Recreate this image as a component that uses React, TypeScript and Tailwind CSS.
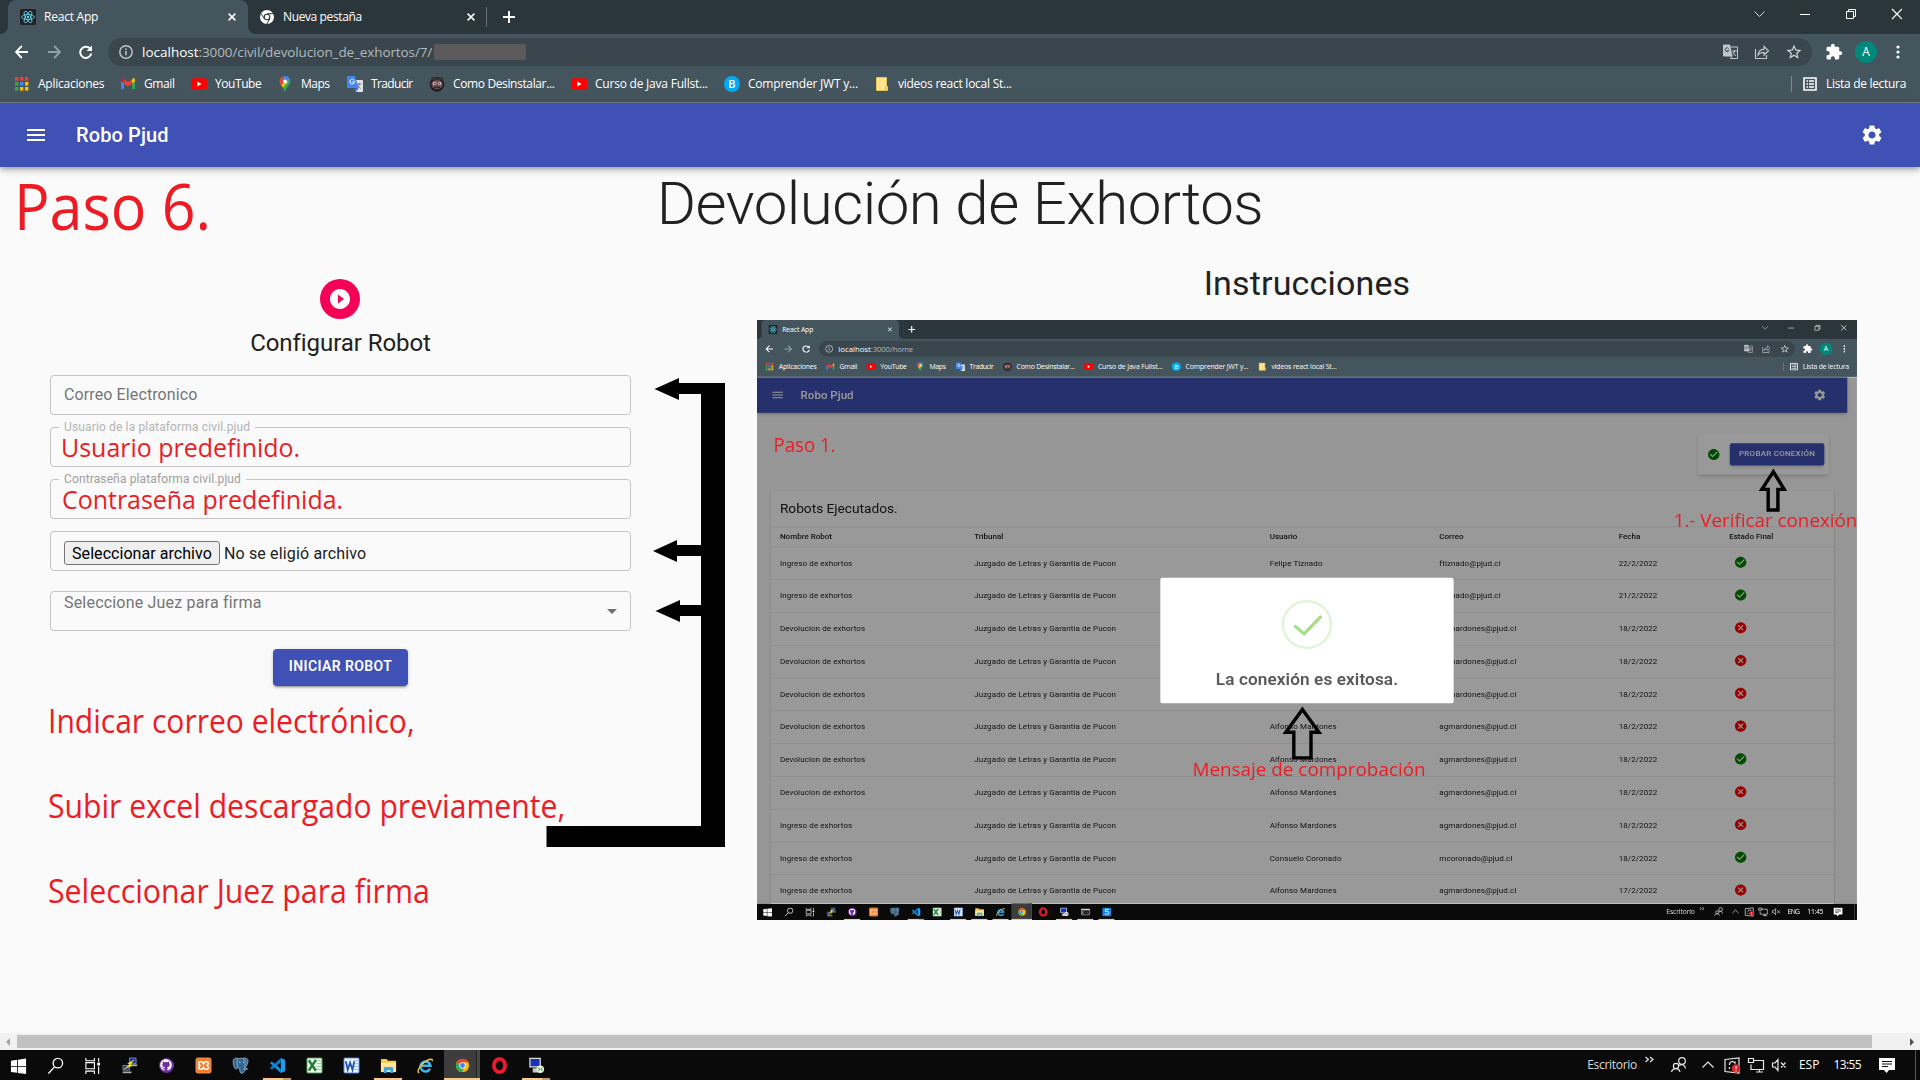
import { useLayoutEffect, useRef, useState, type ReactNode } from "react";
import {
  MdCancel,
  MdCheckCircle,
  MdExtension,
  MdMenu,
  MdPlayCircleFilled,
  MdSettings,
  MdStarBorder,
} from "react-icons/md";
import { FaGithub } from "react-icons/fa";

/* Sets a run of text to an exact width by spreading the difference over its letters. */
function Fit({ w, className = "", children }: { w: number; className?: string; children: string }) {
  const ref = useRef<HTMLSpanElement>(null);
  const [spacing, setSpacing] = useState(0);
  useLayoutEffect(() => {
    if (ref.current) setSpacing((w - ref.current.offsetWidth) / children.length);
  }, [w, children]);
  return (
    <span
      ref={ref}
      className={`inline-block justify-self-start whitespace-pre ${className}`}
      style={{ letterSpacing: `${spacing}px` }}
    >
      {children}
    </span>
  );
}

/* Red annotation drawn over the page, condensed to an exact width. */
function Note({ w, className = "", children }: { w: number; className?: string; children: string }) {
  const ref = useRef<HTMLSpanElement>(null);
  const [scale, setScale] = useState(1);
  useLayoutEffect(() => {
    if (ref.current) setScale(w / ref.current.offsetWidth);
  }, [w, children]);
  return (
    <span
      ref={ref}
      className={`absolute origin-left whitespace-nowrap font-['Open_Sans',sans-serif] leading-none text-[#ed1c24] ${className}`}
      style={{ transform: `scaleX(${scale})` }}
    >
      {children}
    </span>
  );
}

/* ---------- small icons ---------- */

const ReactLogo = () => (
  <svg viewBox="0 0 16 16" className="size-4 shrink-0">
    <rect width="16" height="16" rx="1.5" fill="#222" />
    <g fill="none" stroke="#61dafb" strokeWidth=".8">
      <ellipse cx="8" cy="8" rx="6.4" ry="2.5" />
      <ellipse cx="8" cy="8" rx="6.4" ry="2.5" transform="rotate(60 8 8)" />
      <ellipse cx="8" cy="8" rx="6.4" ry="2.5" transform="rotate(120 8 8)" />
    </g>
    <circle cx="8" cy="8" r="1.2" fill="#61dafb" />
  </svg>
);

const ChromeMono = () => (
  <svg viewBox="0 0 16 16" className="size-4 shrink-0">
    <circle cx="8" cy="8" r="7" fill="#fff" />
    <circle cx="8" cy="8" r="3.3" fill="#2b363c" />
    <circle cx="8" cy="8" r="2.2" fill="#fff" />
    <path d="M8 4.7h6.2M5.1 9.6L2 4.4M10.9 9.6L7.8 15" stroke="#2b363c" strokeWidth="1" />
  </svg>
);

const Cross = () => (
  <svg viewBox="0 0 8 8" className="size-2 shrink-0">
    <path d="M.6.6l6.8 6.8M7.4.6L.6 7.4" stroke="#fff" strokeWidth="1.5" />
  </svg>
);

const AppsIcon = () => (
  <svg viewBox="0 0 16 16" className="size-4">
    {["#ea4335", "#ea4335", "#ea4335", "#34a853", "#4285f4", "#fbbc04", "#34a853", "#fbbc04", "#fbbc04"].map((c, i) => (
      <rect key={i} x={1 + (i % 3) * 5} y={1 + Math.floor(i / 3) * 5} width="3.4" height="3.6" fill={c} />
    ))}
  </svg>
);

const GmailIcon = () => (
  <svg viewBox="0 0 16 16" className="size-4">
    <path d="M1 4v9h3V7z" fill="#4285f4" />
    <path d="M15 4v9h-3V7z" fill="#34a853" />
    <path d="M1 5V3.6C1 2.4 2.4 2 3.3 2.6L4 3.2v4.3L1 5.3z" fill="#c5221f" />
    <path d="M15 5V3.6c0-1.2-1.4-1.6-2.3-1L12 3.2v4.3l3-2.2z" fill="#fbbc04" />
    <path d="M4 3.2l4 3 4-3v4.3l-4 3-4-3z" fill="#ea4335" />
  </svg>
);

const YouTubeIcon = () => (
  <svg viewBox="0 0 16 16" className="size-4">
    <rect y="2.3" width="16" height="11.4" rx="2.4" fill="#f00" />
    <path d="M6.3 5.6v4.8L10.6 8z" fill="#fff" />
  </svg>
);

const MapsIcon = () => (
  <svg viewBox="0 0 16 16" className="size-4">
    <clipPath id="pin">
      <path d="M8 0a5.4 5.4 0 0 0-5.4 5.4C2.600 9 6.600 10.500 8 16c1.400-5.500 5.400-7 5.400-10.600A5.400 5.400 0 0 0 8 0z" />
    </clipPath>
    <g clipPath="url(#pin)">
      <path d="M0 0h16v16H0z" fill="#34a853" />
      <path d="M0 0h8L8 5 2 11H0z" fill="#ea4335" />
      <path d="M6 0h10v3L8 6z" fill="#4285f4" />
      <path d="M2 12l7-8 2 2-7 8z" fill="#fbbc04" />
    </g>
    <circle cx="8" cy="5.400" r="1.900" fill="#fff" />
  </svg>
);

const TranslateIcon = () => (
  <svg viewBox="0 0 16 16" className="size-4">
    <path d="M6 4h9.200q.8 0 .8.8v10.400q0 .8-.8.8H9z" fill="#dfe3e8" />
    <path d="M10 8h4.500M12.200 7v1c0 2-1 3.500-2.400 4.500M10.800 9.500c.6 1.300 1.500 2.300 2.900 3" stroke="#667" strokeWidth=".8" fill="none" />
    <path d="M.8 0H8l3.500 12H.8Q0 12 0 11.200V.8Q0 0 .8 0z" fill="#4285f4" />
    <path d="M7.300 4.600A2.300 2.300 0 1 0 7.500 6H5.400" stroke="#fff" strokeWidth="1" fill="none" />
    <path d="M8 12h3.500L9 16z" fill="#3367d6" />
  </svg>
);

const FaceIcon = () => (
  <svg viewBox="0 0 16 16" className="size-4">
    <circle cx="8" cy="8.300" r="7.400" fill="#231f20" />
    <path d="M1.500 4L3 .8l2.500 1.500h5L13 .8 14.500 4z" fill="#3a3334" />
    <ellipse cx="8" cy="8.600" rx="5.600" ry="4.600" fill="#6b5558" />
    <circle cx="5.600" cy="7.400" r="1.700" fill="#d9cfd0" />
    <circle cx="10.400" cy="7.400" r="1.700" fill="#d9cfd0" />
    <circle cx="5.800" cy="7.500" r=".9" fill="#a22" />
    <circle cx="10.200" cy="7.500" r=".9" fill="#a22" />
    <path d="M5 11.500q3-1.300 6 0" stroke="#1b1718" fill="none" />
  </svg>
);

const BIcon = () => (
  <span className="flex size-4 items-center justify-center rounded-full bg-[#03a9f4] font-['Open_Sans',sans-serif] text-[11px] font-semibold text-white">
    B
  </span>
);

const FolderIcon = () => (
  <svg viewBox="0 0 16 16" className="size-4">
    <path d="M2.500 1.500h10v9h1v4h-11z" fill="#ffe48e" stroke="#e9c558" />
    <path d="M11.500 10.500v3.500" stroke="#e9b93f" />
  </svg>
);

/* ---------- browser ---------- */

const bookmarks: { icon: ReactNode; label: string; w: number; box: string }[] = [
  { icon: <AppsIcon />, label: "Aplicaciones", w: 66, box: "w-[106px]" },
  { icon: <GmailIcon />, label: "Gmail", w: 31, box: "w-[71px]" },
  { icon: <YouTubeIcon />, label: "YouTube", w: 46, box: "w-[86px]" },
  { icon: <MapsIcon />, label: "Maps", w: 29, box: "w-[70px]" },
  { icon: <TranslateIcon />, label: "Traducir", w: 42, box: "w-[82px]" },
  { icon: <FaceIcon />, label: "Como Desinstalar...", w: 102, box: "w-[142px]" },
  { icon: <YouTubeIcon />, label: "Curso de Java Fullst...", w: 113, box: "w-[153px]" },
  { icon: <BIcon />, label: "Comprender JWT y...", w: 110, box: "w-[150px]" },
  { icon: <FolderIcon />, label: "videos react local St...", w: 114, box: "w-[150px]" },
];

function BrowserChrome({ newTab = false, path, redacted = false }: { newTab?: boolean; path: ReactNode; redacted?: boolean }) {
  return (
    <div className="h-[103px] border-b border-[#74818a] bg-[#45555e] font-['Open_Sans',sans-serif] text-[12px] text-white">
      <div className="flex h-[34px] bg-[#2b363c]">
        <div className="w-2 bg-[#45555e]">
          <div className="h-full rounded-br-lg bg-[#2b363c]" />
        </div>
        <div className="flex w-[240px] items-center rounded-t-lg bg-[#45555e] pl-3 pr-3">
          <ReactLogo />
          <Fit w={54} className="ml-2">React App</Fit>
          <span className="ml-auto">
            <Cross />
          </span>
        </div>
        <div className="w-2 bg-[#45555e]">
          <div className="h-full rounded-bl-lg bg-[#2b363c]" />
        </div>
        {newTab && (
          <div className="flex w-[231px] items-center pl-[3px]">
            <ChromeMono />
            <Fit w={79} className="ml-2">Nueva pestaña</Fit>
            <span className="ml-auto mr-[11px]">
              <Cross />
            </span>
            <div className="h-5 w-px bg-[#65727a]" />
          </div>
        )}
        <svg viewBox="0 0 12 12" className={newTab ? "ml-4 mt-[11px] size-3" : "ml-2 mt-[11px] size-3"}>
          <path d="M6 0v12M0 6h12" stroke="#fff" strokeWidth="2" />
        </svg>
        <svg viewBox="0 0 150 12" className="ml-auto mr-[18px] mt-2 h-3 w-[150px]" fill="none" stroke="#fff">
          <path d="M2.500 3.500L7.500 8.500L12.500 3.500" stroke="#d5d9db" />
          <path d="M48 6.500h10" />
          <path d="M94.500 3.500h7v7h-7zM96.500 3v-1.500h7v7h-1.500" />
          <path d="M140 1l10 10M150 1l-10 10" strokeWidth="1.200" />
        </svg>
      </div>

      <div className="flex h-9 items-center pl-[15px]">
        <svg viewBox="0 0 80 14" className="h-3.5 w-20" fill="none" strokeWidth="1.800">
          <path d="M13 7H1M6.800 1L1 7l5.800 6" stroke="#fff" />
          <path d="M33 7h12M39.200 1L45 7l-5.800 6" stroke="#95a0a6" />
          <path d="M75.500 4.200A5.600 5.600 0 1 0 76.300 8.600" stroke="#fff" strokeWidth="2" />
          <path d="M77 .6v5.400h-5.400z" fill="#fff" />
        </svg>
        <div className="ml-[13px] flex h-7 w-[1704px] items-center rounded-full bg-[#39464d] pl-[11px] pr-[9px]">
          <svg viewBox="0 0 14 14" className="size-3.5">
            <circle cx="7" cy="7" r="6.200" fill="none" stroke="#c3c9cc" strokeWidth="1.400" />
            <path d="M7 6v4.300M7 3.500v1.500" stroke="#c3c9cc" strokeWidth="1.500" />
          </svg>
          <span className="ml-[9px] text-[13.5px] text-[#b3babe]">{path}</span>
          {redacted && <span className="ml-[2px] h-4 w-[92px] bg-[#5b5959]" />}
          <svg viewBox="0 0 46 16" className="ml-auto mr-3.5 h-4 w-[46px]" fill="none" stroke="#c0c6c9">
            <path d="M.5 1h6.300l2 11H.5z" fill="#c0c6c9" />
            <path d="M5.700 4.800A1.900 1.900 0 1 0 5.800 6.500H4.200" stroke="#39464d" />
            <path d="M8 3h6.500v11.500H7.500l1.500-2.500M9 7h5M11.500 6v1c0 2-1 3.200-2 4M10 8.500c.6 1.500 1.700 2.700 3 3.300" />
            <path d="M32.500 5v9.500h11V11" strokeWidth="1.200" />
            <path d="M35 11c.5-3.800 3-5.600 6-5.800V2.500l4.500 4.300-4.500 4.200V8.300c-2.500 0-4.500.8-6 2.700z" strokeWidth="1.200" />
          </svg>
          <MdStarBorder className="ml-0.5 size-[18px] text-[#d0d5d7]" />
        </div>
        <MdExtension className="ml-[13px] size-[18px]" />
        <div className="ml-3 flex size-[22px] items-center justify-center rounded-full bg-[#00897b] text-[12px]">A</div>
        <svg viewBox="0 0 4 14" className="ml-[19px] h-3.5 w-1" fill="#fff">
          <circle cx="2" cy="2" r="1.600" />
          <circle cx="2" cy="7" r="1.600" />
          <circle cx="2" cy="12" r="1.600" />
        </svg>
      </div>

      <div className="flex h-7 items-center pl-3.5">
        {bookmarks.map((b) => (
          <div key={b.label} className={`flex shrink-0 items-center gap-2 ${b.box}`}>
            <span className="flex size-4 shrink-0">{b.icon}</span>
            <Fit w={b.w}>{b.label}</Fit>
          </div>
        ))}
        <div className="ml-auto h-4 w-px bg-[#7d898f]" />
        <svg viewBox="0 0 14 14" className="ml-[11px] size-3.5" fill="none" stroke="#fff">
          <path d="M1 1h12v12H1z" strokeWidth="1.600" />
          <path d="M3.500 4h1.500M6 4h5M3.500 7h1.500M6 7h5M3.500 10h1.500M6 10h5" strokeWidth="1.400" />
        </svg>
        <Fit w={80} className="ml-[9px] mr-3.5">Lista de lectura</Fit>
      </div>
    </div>
  );
}

function AppBar({ className = "" }: { className?: string }) {
  return (
    <header
      className={`relative flex h-16 shrink-0 items-center bg-[#3f51b5] pl-6 text-white shadow-[0_2px_4px_-1px_rgba(0,0,0,.2),0_4px_5px_0_rgba(0,0,0,.14),0_1px_10px_0_rgba(0,0,0,.12)] ${className}`}
    >
      <MdMenu className="size-6" />
      <Fit w={93} className="ml-7 text-[20px] font-medium">Robo Pjud</Fit>
      <MdSettings className="ml-auto size-6" />
    </header>
  );
}

/* ---------- Windows taskbar ---------- */

const taskIcons: Record<string, ReactNode> = {
  windows: (
    <path d="M1 4l6.600-1v6.500H1zM8.500 2.900L17 1.700v7.800H8.500zM1 10.400h6.600v6.400L1 15.900zM8.500 10.400H17V18l-8.500-1.100z" fill="#fff" />
  ),
  search: (
    <g fill="none" stroke="#fff" strokeWidth="1.400">
      <circle cx="11.500" cy="6.500" r="5" />
      <path d="M8 10.500L1.500 17.500" />
    </g>
  ),
  tasks: (
    <g fill="none" stroke="#fff" strokeWidth="1.200">
      <path d="M2 1v3h9V1M2 18v-3h9v3M2 6h9v6.500H2zM15.500 1v4M15.500 10v8" />
      <path d="M14 6h3v3h-3z" fill="#fff" stroke="none" />
    </g>
  ),
  putty: (
    <g stroke="#777" strokeWidth=".6">
      <path d="M9 1h7v6H9zM2 9h7v5H2z" fill="#1f2f9c" stroke="#c8c8c8" />
      <path d="M9 8h8v1.500H9zM2 15.500h9V17H2z" fill="#c8c8c8" />
      <path d="M14 3L7 7l2 1-6 5 9-4-2-1z" fill="#ff0" stroke="#bb0" />
    </g>
  ),
  xampp: (
    <g>
      <rect x="1" y="1" width="16" height="16" rx="2" fill="#fb7a24" stroke="#f6b98a" strokeWidth=".7" />
      <path d="M5 5h2.500L9 7.500 10.500 5H13q1 0 1 1v1.500L12.500 9l1.500 1.500V12q0 1-1 1h-2.500L9 10.500 7.500 13H5q-1 0-1-1v-1.500L5.500 9 4 7.500V6q0-1 1-1z" fill="none" stroke="#fff" strokeWidth="1.500" />
    </g>
  ),
  postgres: (
    <g fill="#336791" stroke="#9db8cd" strokeWidth=".8">
      <path d="M6.500 1.500C3 .5 1 2 1.200 5c.2 3 1.300 7.500 3 7.800 1 .2 1.600-1 2.300-1.800z" />
      <path d="M12 1.300c3-.7 5.200.7 5 3-.2 2.600-1.800 6-3.300 7.700 1 .6 2.300.3 3 .2-.6 1.300-2.400 1.700-3.800 1.500z" />
      <path d="M6 2.500C8 .8 11.500.8 13 2.500c1.300 1.600 1 4.500.6 7.500-.4 2.300 0 7-3 7.300-2.600.2-2.300-2.600-2.400-5C6.500 12 5.800 10.800 6 9c-.8-2-1.200-5 0-6.500z" />
      <path d="M7.500 5.500h1.500M11.500 5.500h1.200" stroke="#fff" />
    </g>
  ),
  vscode: (
    <g>
      <path d="M12.500 1L17 3v12l-4.500 2z" fill="#1f9cf0" />
      <path d="M12.500 1v4.500L3 13.200 1 11.700 12.500 1z" fill="#0a7acc" />
      <path d="M12.500 17v-4.500L3 4.800 1 6.300 12.500 17z" fill="#0f8fe0" />
    </g>
  ),
  excel: (
    <g>
      <rect x="1" y="1" width="16" height="16" rx="1" fill="#eef7ee" stroke="#3b9b47" />
      <path d="M11 4h5M11 7h5M11 10h5M11 13h5" stroke="#8cc692" />
      <path d="M3 3.500l7.500 11M10.500 3L3 14.500" stroke="#1e7d2f" strokeWidth="2.600" />
    </g>
  ),
  word: (
    <g>
      <rect x="1" y="1" width="16" height="16" rx="1" fill="#eef4ff" stroke="#3f7bd0" />
      <path d="M11 4h5M11 7h5M11 10h5M11 13h5" stroke="#8fb4e6" />
      <path d="M3 4.500l2 9 2.500-7.500L10 13.500l2-9" stroke="#1f54b0" strokeWidth="1.900" fill="none" />
    </g>
  ),
  explorer: (
    <g>
      <path d="M1 2h6l1.500 2H17v12H1z" fill="#f5c751" />
      <path d="M1 6h16v10H1z" fill="#ffe596" />
      <path d="M4 17v-5q0-1.500 1.500-1.500h7q1.500 0 1.500 1.500v5h-3v-3H7v3z" fill="#3aa6e8" />
    </g>
  ),
  ie: (
    <g fill="none">
      <path d="M13.800 12.500A5.300 5.300 0 1 1 14.300 9.300H5" stroke="#3fb6f0" strokeWidth="2.600" />
      <path d="M2.500 16.500C-.5 17 1.500 10 8 5.500 12 2.500 17 .5 16 4.500" stroke="#f5c242" strokeWidth="1.500" />
    </g>
  ),
  chrome: (
    <g>
      <circle cx="9" cy="9" r="7" fill="#fbbc04" />
      <path d="M9 9L2.900 5.500A7 7 0 0 1 15.100 5.500H9z" fill="#ea4335" />
      <path d="M9 9L2.900 5.500A7 7 0 0 0 8.500 16L11 11z" fill="#34a853" />
      <circle cx="9" cy="9" r="3.400" fill="#fff" />
      <circle cx="9" cy="9" r="2.600" fill="#4285f4" />
    </g>
  ),
  opera: <ellipse cx="9" cy="9" rx="5.900" ry="7" fill="none" stroke="#e81c2e" strokeWidth="4" />,
  remote: (
    <g>
      <path d="M2 1.500h11v9H2z" fill="#1734b8" stroke="#dcdcdc" strokeWidth="1.300" />
      <path d="M5 12h6v2h2v2.500H5z" fill="#c9c9c9" />
      <circle cx="13" cy="13" r="4" fill="#e8f2e4" />
      <path d="M10.500 11.500l2 1.500-2 1.500M15.500 11.500l-2 1.500 2 1.500" stroke="#3a8a35" fill="none" />
    </g>
  ),
  cmd: (
    <g>
      <path d="M1.500 3.500h15v11h-15z" fill="#111" stroke="#ddd" />
      <path d="M1.500 4.500h15" stroke="#ddd" strokeWidth="2" />
      <path d="M6.500 8.500h-3v3h3M9 9h1M9 11h1M12 8.500l2 3" stroke="#ddd" fill="none" />
    </g>
  ),
  blue: (
    <g>
      <path d="M1 1h16v16H1z" fill="#1683e8" />
      <path d="M13 4H6.500v4H11q1.500 0 1.500 2v1q0 2-1.500 2H5.500" stroke="#fff" strokeWidth="1.600" fill="none" />
    </g>
  ),
};

type Task = { id: string; open?: boolean; grouped?: boolean };

function Taskbar({ tasks, lang, time }: { tasks: Task[]; lang: string; time: string }) {
  return (
    <div className="flex h-[30px] items-center bg-[#0a0a0a] font-['Open_Sans',sans-serif] text-[12px] text-white">
      {tasks.map((t) => (
        <div key={t.id} className="relative flex h-[30px] w-[37px] shrink-0 items-center justify-center pr-px">
          {t.id === "chrome" && (
            <div className="absolute inset-y-0 left-0 flex w-9 bg-[#3d3d3d]">
              <div className="ml-auto w-1 border-l border-[#222] bg-[#484848]" />
            </div>
          )}
          {t.id === "github" ? (
            <span className="flex size-[15px] items-center justify-center rounded-full bg-[#6e2fa0]">
              <FaGithub className="size-[12px]" />
            </span>
          ) : (
            <svg viewBox="0 0 18 18" className="relative size-[17px]">
              {taskIcons[t.id]}
            </svg>
          )}
          {t.open && (
            <div className={`absolute bottom-0 flex h-0.5 bg-[#fbc88b] ${t.id === "chrome" ? "left-0 w-9" : "left-1 w-7"}`}>
              {t.grouped && <div className="ml-auto w-2 bg-[#c69a6c]" />}
            </div>
          )}
        </div>
      ))}
      <Fit w={50} className="ml-auto text-[#dcdcdc]">Escritorio</Fit>
      <svg viewBox="0 0 290 30" className="ml-2 h-[30px] w-[155px] shrink-0" preserveAspectRatio="xMinYMid slice" fill="none" stroke="#e8e8e8">
        <path d="M.5 7l3 2.500-3 2.500M5 7l3 2.500-3 2.500" strokeWidth="1.200" />
        <g strokeWidth="1.200">
          <circle cx="37" cy="11" r="3.300" />
          <circle cx="31" cy="16" r="2.600" />
          <path d="M26.500 22c.5-2.500 2-3.400 4.500-3.400s3.500 1 4 3.400M34 15.500c3.500-2 6-.5 6.500 3" />
          <path d="M57.500 17.500L63 12l5.500 5.500" />
          <path d="M80 9.500l14-1.500v15L80 21.500z" />
          <path d="M84.500 15a3 3 0 0 1 5.500-2v-1.500M84.500 17v2" />
          <circle cx="91" cy="18.500" r="4.300" fill="#e0242b" stroke="none" />
          <path d="M91 16v3M91 20.200v1.200" />
          <path d="M108 10.500h10.500v9H106v-5M111 22h7M114.500 20v2M103.500 8.500h5v4h-5z" />
          <path d="M127.500 13h2.500l3-3.500v11L130 17h-2.500zM136 12.500l4.500 5M140.500 12.500l-4.500 5" />
        </g>
      </svg>
      <Fit w={20} className="-ml-px">{lang}</Fit>
      <Fit w={28} className="ml-[14px]">{time}</Fit>
      <svg viewBox="0 0 16 17" className="ml-[18px] h-[17px] w-4">
        <path d="M0 1h16v12h-6l-2.500 3L5 13H0z" fill="#fff" />
        <path d="M3 4.500h10M3 7h10M3 9.500h6" stroke="#111" />
      </svg>
      <div className="ml-5 mr-1 h-[30px] w-px bg-[#555]" />
    </div>
  );
}

/* ---------- instructions picture: a smaller desktop ---------- */

const rows = [
  ["Ingreso de exhortos", "Felipe Tiznado", "ftiznado@pjud.cl", "22/2/2022", true],
  ["Ingreso de exhortos", "Felipe Tiznado", "ftiznado@pjud.cl", "21/2/2022", true],
  ["Devolucion de exhortos", "Alfonso Mardones", "agmardones@pjud.cl", "18/2/2022", false],
  ["Devolucion de exhortos", "Alfonso Mardones", "agmardones@pjud.cl", "18/2/2022", false],
  ["Devolucion de exhortos", "Alfonso Mardones", "agmardones@pjud.cl", "18/2/2022", false],
  ["Devolucion de exhortos", "Alfonso Mardones", "agmardones@pjud.cl", "18/2/2022", false],
  ["Devolucion de exhortos", "Alfonso Mardones", "agmardones@pjud.cl", "18/2/2022", true],
  ["Devolucion de exhortos", "Alfonso Mardones", "agmardones@pjud.cl", "18/2/2022", false],
  ["Ingreso de exhortos", "Alfonso Mardones", "agmardones@pjud.cl", "18/2/2022", false],
  ["Ingreso de exhortos", "Consuelo Coronado", "mcoronado@pjud.cl", "18/2/2022", true],
  ["Ingreso de exhortos", "Alfonso Mardones", "agmardones@pjud.cl", "17/2/2022", false],
] as const;

const columns = "grid grid-cols-[339px_516px_296px_313px_193px_1fr] items-center pl-4";

function InstructionPicture() {
  return (
    <div className="h-[600px] w-[1100px] overflow-hidden">
      <div className="relative flex h-[1080px] w-[1920px] origin-top-left scale-x-[0.5729] scale-y-[0.5556] flex-col">
        <BrowserChrome
          path={
            <span className="flex">
              <Fit w={57} className="text-white">localhost</Fit>
              <Fit w={74}>:3000/home</Fit>
            </span>
          }
        />
        <div className="relative h-[947px] overflow-hidden bg-[#fafafa] text-[#212121]">
          <AppBar className="w-[1903px] pr-9" />
          <div className="flex justify-end pr-[49px] pt-[38px]">
            <div className="flex h-[73px] w-[229px] items-center justify-between rounded bg-white pl-4 pr-2 shadow-md">
              <MdCheckCircle className="size-6 text-[#008000]" />
              <div className="flex h-10 w-[165px] items-center justify-center rounded bg-[#3f51b5] pb-0.5 text-[14px] font-medium text-white shadow-md">
                <Fit w={133}>PROBAR CONEXIÓN</Fit>
              </div>
            </div>
          </div>
          <div className="ml-6 mt-[30px] w-[1856px] rounded bg-white text-[14px] shadow">
            <div className="flex h-16 items-center pl-4">
              <Fit w={206} className="text-[24px]">Robots Ejecutados.</Fit>
            </div>
            <div className={`h-[37px] border-y border-[#e0e0e0] font-medium ${columns}`}>
              <span>Nombre Robot</span>
              <span>Tribunal</span>
              <span>Usuario</span>
              <span>Correo</span>
              <span>Fecha</span>
              <span>Estado Final</span>
            </div>
            {rows.map((r, i) => (
              <div key={i} className={`h-[59px] border-b border-[#e0e0e0] pb-[2px] ${columns}`}>
                <span className="tracking-[0.14px]">{r[0]}</span>
                <Fit w={248}>Juzgado de Letras y Garantia de Pucon</Fit>
                <span className="tracking-[0.14px]">{r[1]}</span>
                <span className="tracking-[0.14px]">{r[2]}</span>
                <Fit w={68}>{r[3]}</Fit>
                {r[4] ? (
                  <MdCheckCircle className="mb-[3px] ml-2 size-6 text-[#008000]" />
                ) : (
                  <MdCancel className="mb-[3px] ml-2 size-6 text-[#ff0000]" />
                )}
              </div>
            ))}
          </div>
          <div className="absolute inset-0 flex items-start justify-center bg-black/40">
            <div className="mt-[361px] flex h-[226px] w-[512px] flex-col items-center rounded bg-white pt-10">
              <svg viewBox="0 0 88 88" className="size-[88px]" fill="none">
                <circle cx="44" cy="44" r="42" stroke="#e1f3d5" strokeWidth="4" />
                <path d="M22 46l17 15 30-32" stroke="#a5dc86" strokeWidth="5.500" />
              </svg>
              <Fit w={318} className="mt-[34px] text-[30px] font-semibold leading-[42px] text-[#595959]">La conexión es exitosa.</Fit>
            </div>
          </div>
        </div>
        <Taskbar
          lang="ENG"
          time="11:45"
          tasks={[
            { id: "windows" }, { id: "search" }, { id: "tasks" }, { id: "putty" },
            { id: "github", open: true }, { id: "xampp" }, { id: "postgres" },
            { id: "vscode", open: true, grouped: true }, { id: "excel" }, { id: "word", open: true },
            { id: "explorer", open: true }, { id: "ie", open: true }, { id: "chrome", open: true }, { id: "opera" },
            { id: "remote", open: true }, { id: "cmd", open: true }, { id: "blue", open: true },
          ]}
        />
        <svg viewBox="0 0 1920 1080" className="absolute inset-0" fill="none" stroke="#000" strokeWidth="6">
          <path d="M1774 273l19 32h-11v37h-17v-37h-11z" />
          <path d="M952 701l29 41h-14v46h-30v-46h-14z" />
        </svg>
        <Note w={108} className="left-[29px] top-[206px] text-[36px]">Paso 1.</Note>
        <Note w={321} className="left-[1600px] top-[344px] text-[32px]">1.- Verificar conexión</Note>
        <Note w={407} className="left-[760px] top-[790px] text-[34px]">Mensaje de comprobación</Note>
      </div>
    </div>
  );
}

/* ---------- form ---------- */

const field = "relative h-10 w-[581px] shrink-0 rounded border border-[#c4c4c4] pl-[13px] text-[16px]";

function Form() {
  return (
    <div className="flex w-[581px] flex-col items-center">
      <div className="mr-[2px] flex size-10 items-center justify-center rounded-full bg-[#f50057] text-white">
        <MdPlayCircleFilled className="size-6" />
      </div>
      <Fit w={180} className="mt-2 text-[24px] leading-8">Configurar Robot</Fit>
      <div className={`${field} mt-4 flex items-center text-[#757575]`}>
        <Fit w={134}>Correo Electronico</Fit>
      </div>
      <div className={`${field} mt-3`}>
        <span className="absolute -top-[11px] left-2 flex h-5 items-center bg-[#fafafa] px-[5px]">
          <Fit w={186} className="text-[12px] text-[#b4b4b4]">Usuario de la plataforma civil.pjud</Fit>
        </span>
        <Note w={239} className="left-[10px] top-[6px] text-[26px]">Usuario predefinido.</Note>
      </div>
      <div className={`${field} mt-3`}>
        <span className="absolute -top-[11px] left-2 flex h-5 items-center bg-[#fafafa] px-[5px]">
          <Fit w={177} className="text-[12px] text-[#a0a0a0]">Contraseña plataforma civil.pjud</Fit>
        </span>
        <Note w={281} className="left-[11px] top-[6px] text-[26px]">Contraseña predefinida.</Note>
      </div>
      <div className={`${field} mt-3 flex items-center pt-1`}>
        <div className="flex h-6 w-[156px] items-center justify-center rounded-[3px] border border-[#767676] bg-[#efefef] pt-0.5 text-black">
          <Fit w={140}>Seleccionar archivo</Fit>
        </div>
        <Fit w={142} className="ml-1 pt-0.5">No se eligió archivo</Fit>
      </div>
      <div className={`${field} mt-5 flex justify-between pr-[13px] text-[#757575]`}>
        <Fit w={197} className="leading-[22px]">Seleccione Juez para firma</Fit>
        <svg viewBox="0 0 10 5" className="mt-[17px] h-[5px] w-2.5">
          <path d="M0 0h10L5 5z" fill="#6f6f6f" />
        </svg>
      </div>
      <div className="mt-[18px] flex h-[37px] w-[135px] items-center justify-center rounded bg-[#3f51b5] pb-[2px] text-[14px] font-semibold text-white shadow-[0_3px_1px_-2px_rgba(0,0,0,.2),0_2px_2px_0_rgba(0,0,0,.14),0_1px_5px_0_rgba(0,0,0,.12)]">
        <Fit w={103}>INICIAR ROBOT</Fit>
      </div>
    </div>
  );
}

export default function App() {
  return (
    <div className="flex h-[1080px] w-[1920px] flex-col overflow-hidden bg-[#fafafa] font-[Roboto,sans-serif] text-[#212121]">
      <BrowserChrome
        newTab
        redacted
        path={
          <span className="flex">
            <Fit w={57} className="text-white">localhost</Fit>
            <Fit w={234}>:3000/civil/devolucion_de_exhortos/7/</Fit>
          </span>
        }
      />
      <AppBar className="pr-9" />
      <main className="relative h-[866px] shrink-0">
        <h1 className="flex h-[72px] justify-center text-[60px] font-light leading-[74px]">
          <Fit w={606}>Devolución de Exhortos</Fit>
        </h1>
        <div className="flex pl-[50px]">
          <div className="pt-10">
            <Form />
          </div>
          <div className="ml-[126px] flex flex-col items-center pt-6">
            <h2 className="mb-[17px] text-[34px] leading-10">
              <Fit w={207}>Instrucciones</Fit>
            </h2>
            <InstructionPicture />
          </div>
        </div>

        <Note w={197} className="left-[14px] top-[7px] text-[64px]">Paso 6.</Note>
        <Note w={367} className="left-[48px] top-[538px] text-[32px]">Indicar correo electrónico,</Note>
        <Note w={517} className="left-[48px] top-[623px] text-[32px]">Subir excel descargado previamente,</Note>
        <Note w={382} className="left-[48px] top-[708px] text-[32px]">Seleccionar Juez para firma</Note>
        <svg viewBox="546 377 180 470" className="absolute left-[546px] top-[210px] h-[470px] w-[180px]">
          <path d="M725 383v464H546.500v-21H701V616h-21v6l-24.500-11 24.500-11v5h21v-49h-24v6l-24-11 24-11v5h24V394h-22v6l-24.500-11L679 378v5z" />
        </svg>
      </main>
      <div className="flex h-[17px] shrink-0 items-center bg-[#f1f1f1]">
        <svg viewBox="0 0 17 17" className="size-[17px]">
          <path d="M10 5v8L6 9z" fill="#a3a3a3" />
        </svg>
        <div className="h-[13px] w-[1855px] bg-[#c1c1c1]" />
        <svg viewBox="0 0 17 17" className="ml-auto size-[17px]">
          <path d="M7 5v8l4-4z" fill="#505050" />
        </svg>
      </div>
      <Taskbar
        lang="ESP"
        time="13:55"
        tasks={[
          { id: "windows" }, { id: "search" }, { id: "tasks" }, { id: "putty" }, { id: "github" }, { id: "xampp" },
          { id: "postgres" }, { id: "vscode", open: true, grouped: true }, { id: "excel" }, { id: "word" },
          { id: "explorer", open: true }, { id: "ie" }, { id: "chrome", open: true }, { id: "opera" },
          { id: "remote", open: true, grouped: true },
        ]}
      />
    </div>
  );
}
